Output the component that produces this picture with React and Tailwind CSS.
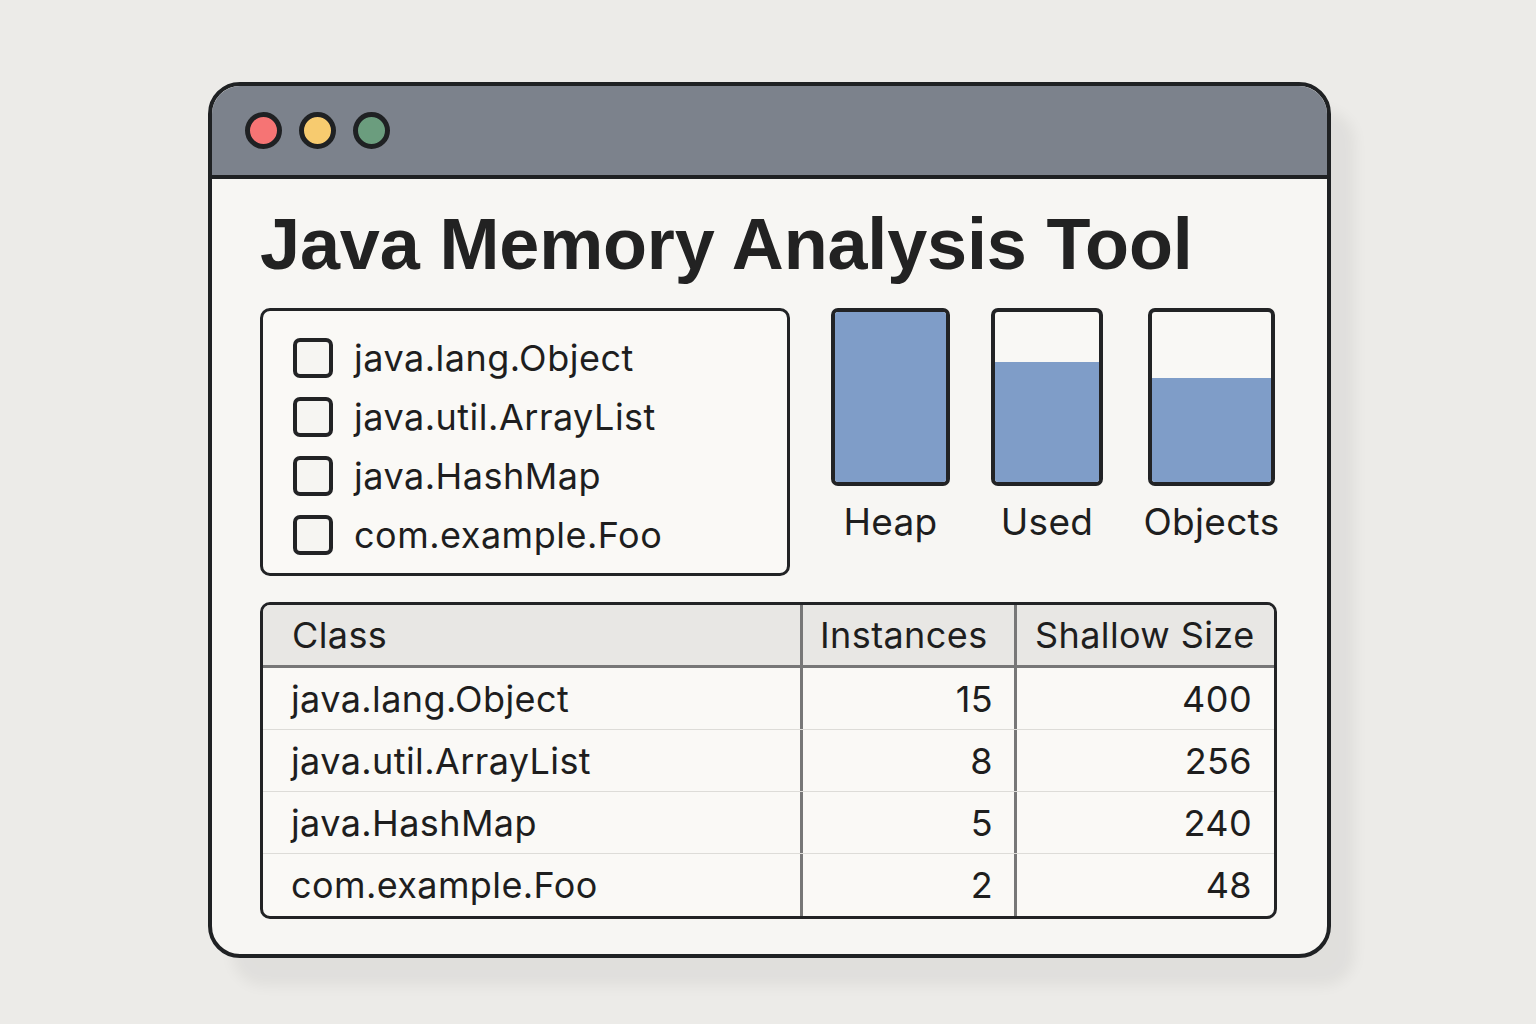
const classes = ['java.lang.Object', 'java.util.ArrayList', 'java.HashMap', 'com.example.Foo'];

const rows = [
  { name: 'java.lang.Object', count: 15, size: 400 },
  { name: 'java.util.ArrayList', count: 8, size: 256 },
  { name: 'java.HashMap', count: 5, size: 240 },
  { name: 'com.example.Foo', count: 2, size: 48 },
];

// empty = px of the bar left unfilled at the top
const bars = [
  { label: 'Heap', width: 'w-[119px]', gap: 'ml-0', empty: 0 },
  { label: 'Used', width: 'w-[112px]', gap: 'ml-[41px]', empty: 50 },
  { label: 'Objects', width: 'w-[127px]', gap: 'ml-[45px]', empty: 66 },
];

function Bar({ label, width, gap, empty }) {
  return (
    <div className={`${gap} ${width} flex flex-col items-center`}>
      <div className="w-full h-[178px] border-[4px] border-[#222325] rounded-[7px] bg-[#f9f8f5] flex flex-col overflow-hidden">
        <div className="shrink-0" style={{ height: empty }} />
        <div className="flex-1 bg-[#7f9dc8]" />
      </div>
      <div className="mt-[17px] text-[37px] leading-none tracking-[0.3px] whitespace-nowrap text-[#1e1e1e]">{label}</div>
    </div>
  );
}

export default function App() {
  return (
    <div
      className="min-h-screen w-full bg-[#ecebe8] pt-[82px] pl-[208px] text-[#1e1e1e]"
      style={{ fontFamily: 'Inter, "Liberation Sans", sans-serif' }}
    >
      <div className="w-[1123px] h-[876px] border-[4px] border-[#1f2123] rounded-[32px] overflow-hidden bg-[#f7f6f3] shadow-[24px_28px_14px_rgba(0,0,0,0.05)] flex flex-col">
        {/* title bar */}
        <div className="h-[93px] shrink-0 bg-[#7c828c] border-b-[4px] border-[#1f2123] flex items-center gap-[17px] pl-[33px]">
          <div className="w-[37px] h-[37px] rounded-full border-[5px] border-[#1f2123] bg-[#f67474]" />
          <div className="w-[37px] h-[37px] rounded-full border-[5px] border-[#1f2123] bg-[#f7cb6f]" />
          <div className="w-[37px] h-[37px] rounded-full border-[5px] border-[#1f2123] bg-[#6b9d7e]" />
        </div>

        <div className="flex-1 pl-[48px] pt-[29px] flex flex-col">
          <h1
            className="text-[72px] leading-none font-bold tracking-[-0.15px] text-[#222]"
            style={{ fontFamily: '"Liberation Sans", Arial, sans-serif' }}
          >
            Java Memory Analysis Tool
          </h1>

          <div className="mt-[28px] flex">
            <div className="w-[530px] h-[268px] border-[3px] border-[#222325] rounded-[10px] bg-[#faf9f6] pl-[30px] pt-[17px] flex flex-col">
              {classes.map((c) => (
                <div key={c} className="h-[59px] flex items-center gap-[21px]">
                  <div className="w-[40px] h-[40px] border-[4px] border-[#222325] rounded-[7px] bg-[#f6f5f2]" />
                  <span className="text-[36px] leading-none tracking-[0.5px]">{c}</span>
                </div>
              ))}
            </div>

            <div className="ml-[41px] flex">
              {bars.map((b) => (
                <Bar key={b.label} {...b} />
              ))}
            </div>
          </div>

          <div className="mt-[26px] w-[1017px] border-[3px] border-[#222325] rounded-[10px] overflow-hidden bg-[#faf9f6]">
            <div className="flex h-[63px] bg-[#e8e7e4] border-b-[3px] border-[#777]">
              <div className="w-[537px] flex items-center pl-[29px] text-[36px] tracking-[0.4px]">Class</div>
              <div className="w-[214px] flex items-center pl-[17px] border-l-[3px] border-[#777] text-[36px] tracking-[0.4px]">Instances</div>
              <div className="flex-1 flex items-center pl-[18px] border-l-[3px] border-[#777] text-[36px] tracking-[0.4px]">Shallow Size</div>
            </div>
            {rows.map((r, i) => (
              <div key={r.name} className={`flex h-[62px] ${i < rows.length - 1 ? 'border-b border-[#dddcd8]' : ''}`}>
                <div className="w-[537px] flex items-center pl-[28px] text-[36px] tracking-[0.4px]">{r.name}</div>
                <div className="w-[214px] flex items-center justify-end pr-[21px] border-l-[3px] border-[#777] text-[36px] tracking-[0.4px]">{r.count}</div>
                <div className="flex-1 flex items-center justify-end pr-[22px] border-l-[3px] border-[#777] text-[36px] tracking-[0.4px]">{r.size}</div>
              </div>
            ))}
          </div>
        </div>
      </div>
    </div>
  );
}
